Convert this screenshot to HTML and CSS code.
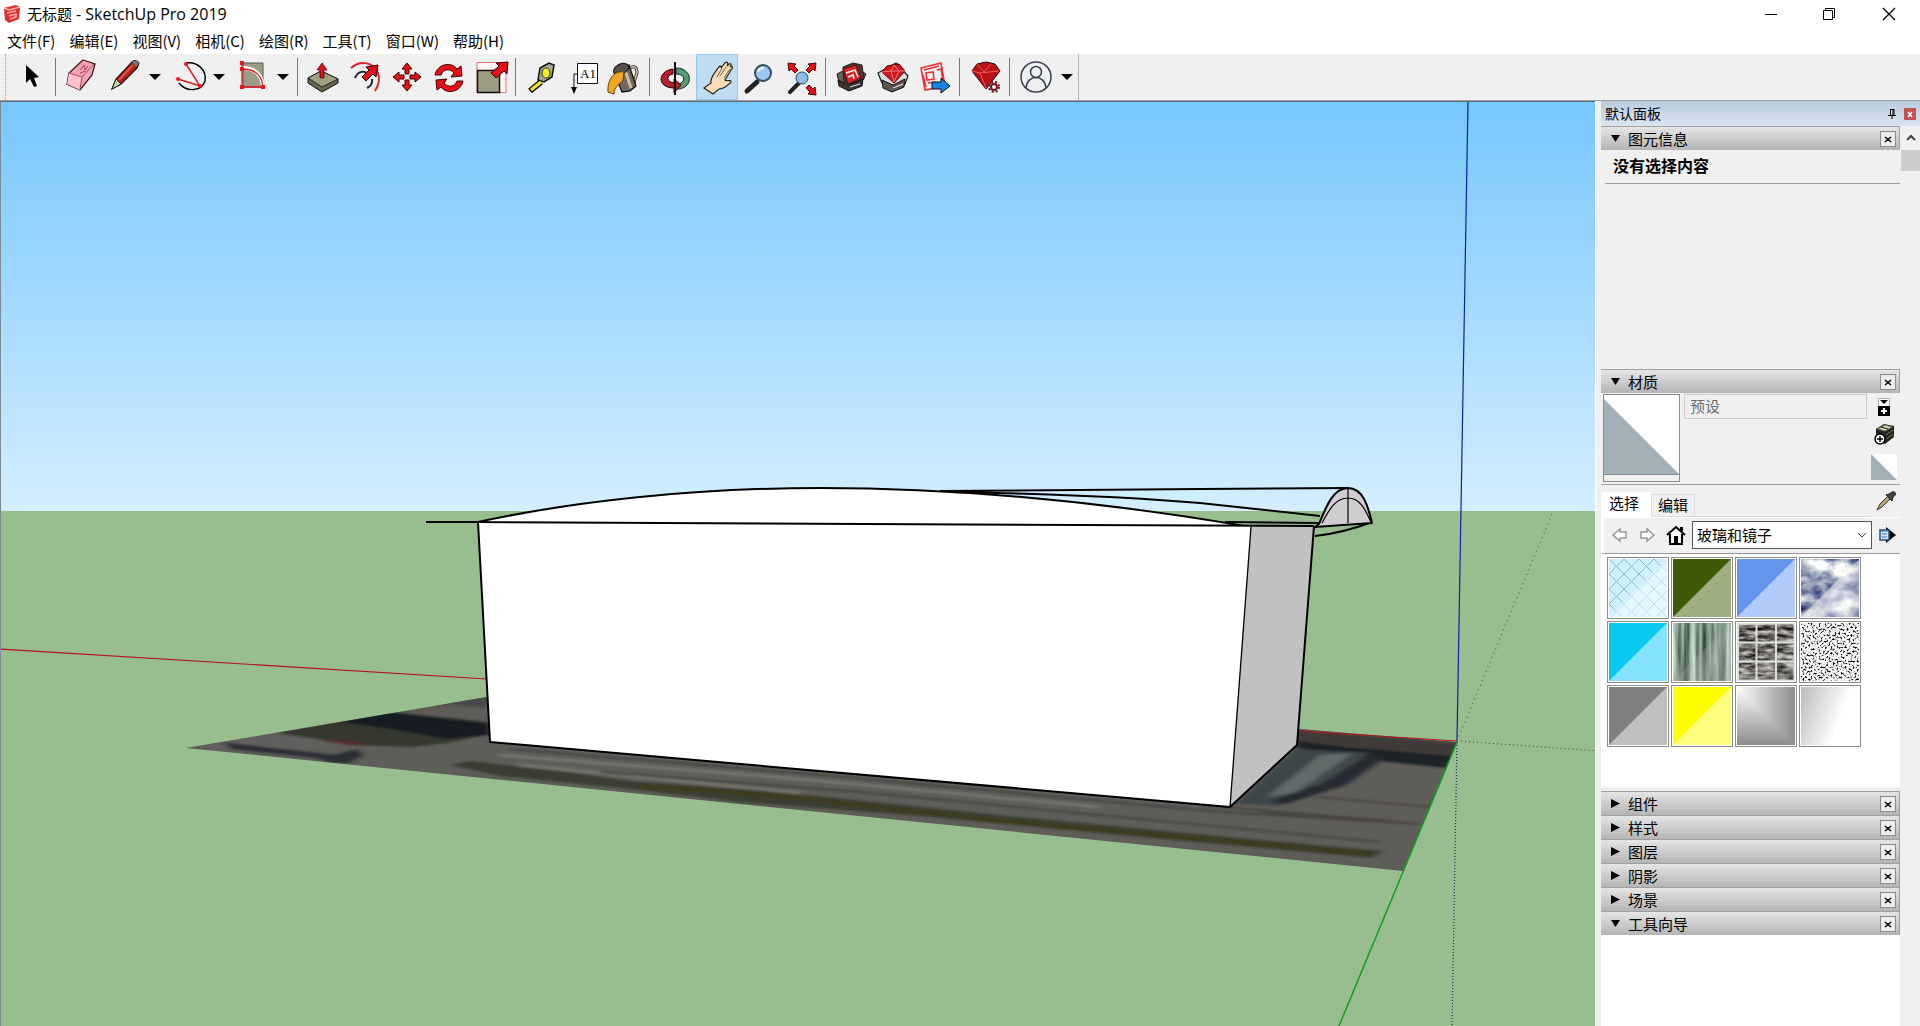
FILE: index.html
```html
<!DOCTYPE html>
<html lang="zh-CN">
<head>
<meta charset="utf-8">
<title>无标题 - SketchUp Pro 2019</title>
<link rel="stylesheet" href="styles.css">
</head>
<body>
<svg class="defs" aria-hidden="true">
  <defs>
    <symbol id="x" viewBox="0 0 14 14"><path d="M4 5l6 5M10 5l-6 5" stroke="#000" stroke-width="1.500" fill="none"/></symbol>
    <symbol id="caret" viewBox="0 0 12 6"><path d="M0 0h12L6 6z"/></symbol>
    <symbol id="open" viewBox="0 0 10 10"><path d="M0 1h10L5 9z"/></symbol>
    <symbol id="shut" viewBox="0 0 10 10"><path d="M0 0v10l10-5z"/></symbol>
    <symbol id="half" viewBox="0 0 58 58"><path d="M58 0v58H0z" fill="#fff" fill-opacity=".5"/></symbol>
  </defs>
</svg>
<header class="titlebar">
  <svg class="logo" width="18" height="18" viewBox="3 5 18 18"><path d="M4 8l12-3 4 2-1 12-10 4-4-3z" fill="#e32b2b"/><path d="M4 8l5 2 11-3M7 13l9-2M9 16l7-2v3l-6 2" stroke="#ffb3b0" stroke-width="1.500" fill="none"/></svg>
  <h1 class="title">无标题 <span class="app-name">- SketchUp Pro 2019</span></h1>
  <div class="window-buttons">
    <button aria-label="最小化"><svg width="14" height="14" viewBox="0 0 14 14"><path d="M1 7.500h12" stroke="#000"/></svg></button>
    <button aria-label="还原"><svg width="14" height="14" viewBox="0 0 14 14"><path d="M1.500 3.500h9v9h-9zM3.500 3V1.500h9v9H11" stroke="#000" fill="none"/></svg></button>
    <button aria-label="关闭"><svg width="14" height="14" viewBox="0 0 14 14"><path d="M1 1l12 12M13 1L1 13" stroke="#000" stroke-width="1.200"/></svg></button>
  </div>
</header>
<nav class="menubar">
  <button>文件(F)</button><button>编辑(E)</button><button>视图(V)</button><button>相机(C)</button><button>绘图(R)</button><button>工具(T)</button><button>窗口(W)</button><button>帮助(H)</button>
</nav>
<div class="toolbar-row">
<div class="toolbar" role="toolbar" aria-label="工具">
  <span class="grip"></span>
  <button aria-label="选择"><svg viewBox="10 56 42 46"><path d="M26 67v18l4-4 4 8 3-1-3-8 5-1z"/></svg></button>
  <span class="sep"></span>
  <button aria-label="橡皮擦"><svg viewBox="60 56 42 46"><path d="M83 62l12 4-3 11-12 15-13-6 2-11z" fill="#f7a1b4" stroke="#3a1a20" stroke-width="1.300"/><path d="M69 75l13 4-2 13-13-6z" fill="#ffc2cc"/><path d="M69 75l13 4 12-13M82 79l-2 12" stroke="#a0505f" fill="none"/><path d="M80 72l4-5 1 5 3-4M80 75l6-2" stroke="#b23c5c" fill="none"/></svg></button>
  <button aria-label="直线"><svg viewBox="102 56 42 46"><path d="M112 91l4-10 16-17q4-3 7 1-1 4-3 6l-15 15z" fill="#b5221e" stroke="#241010" stroke-width="1.200"/><path d="M112 91l4-10 5 5z" fill="#cdd9a0" stroke="#222"/><path d="M119 82l14-15" stroke="#e96153" stroke-width="1.500"/><path d="M132 64q4-3 7 1l-3 4z" fill="#777"/></svg></button>
  <button class="drop" aria-label="直线选项"><svg><use href="#caret"/></svg></button>
  <button aria-label="圆弧"><svg viewBox="166 56 42 46"><path d="M186 65c11-2 21 7 19 18-3 10-18 12-26 2" fill="none" stroke="#000" stroke-width="1.400"/><path d="M186 66l14 22-22-7" fill="none" stroke="#e3101a" stroke-width="1.400"/><g fill="#ef1020"><circle cx="186" cy="66" r="2"/><circle cx="200" cy="88" r="2"/><circle cx="178" cy="81" r="2"/></g></svg></button>
  <button class="drop" aria-label="圆弧选项"><svg><use href="#caret"/></svg></button>
  <button aria-label="矩形"><svg viewBox="230 56 42 46"><path d="M243 65h20v24h-20z" fill="#9c9c82" stroke="#555"/><path d="M242 70c13 0 20 6 21 19" stroke="#fff" stroke-width="4" fill="none"/><path d="M242 65v24h21M242 71c13 0 20 6 21 18" stroke="#e3101a" stroke-width="1.300" fill="none"/><path fill="#ef1020" d="M240 63h4v4h-4zM240 69h4v4h-4zM240 87h4v4h-4zM261 87h4v4h-4z"/></svg></button>
  <button class="drop" aria-label="矩形选项"><svg><use href="#caret"/></svg></button>
  <span class="sep"></span>
  <button aria-label="推拉"><svg viewBox="302 56 42 46"><path d="M308 80l13-7 17 8v4l-16 9-14-9z" fill="#656551" stroke="#111"/><path d="M308 80l13-7 17 8-16 8z" fill="#a0a084" stroke="#222"/><path d="M322 65l5 7h-3v8h-4v-8h-3z" fill="#e3101a" stroke="#300" stroke-width=".7"/></svg></button>
  <button aria-label="偏移"><svg viewBox="344 56 42 46"><path d="M351 70c10-9 23-5 27 5 2 6 1 12-3 18" stroke="#e3202a" stroke-width="2" fill="none"/><path d="M355 80c3-7 9-8 14-4M372 81q1 6-5 9" stroke="#222" stroke-width="2" fill="none"/><path d="M362 79l7-7-3-3 12-2-2 12-3-3-7 7z" fill="#e3101a" stroke="#300"/></svg></button>
  <button aria-label="移动"><svg viewBox="386 56 42 46"><path id="mv" d="M407 65l5 6h-3v5h-4v-5h-3z" fill="#e3101a" stroke="#400"/><use href="#mv" transform="rotate(90 407 79)"/><use href="#mv" transform="rotate(180 407 79)"/><use href="#mv" transform="rotate(270 407 79)"/></svg></button>
  <button aria-label="旋转"><svg viewBox="428 56 42 46"><path id="rt" d="M435 77c2-11 16-14 22-6l4-3 1 10-11 1 3-4c-4-5-11-4-13 2z" fill="#e3101a" stroke="#400"/><use href="#rt" transform="rotate(180 449 80)"/></svg></button>
  <button aria-label="缩放"><svg viewBox="470 56 42 46"><path d="M477 64.500h29v30h-29z" fill="#fff5f5" stroke="#e3707a"/><path d="M477.500 72.500h22v22h-22z" fill="#9c9c82" stroke="#111" stroke-width="1.500"/><path d="M491 75l8-7-3-3 12-1-1 12-3-3-8 7z" fill="#e3101a" stroke="#300"/></svg></button>
  <span class="sep"></span>
  <button aria-label="卷尺"><svg viewBox="520 56 42 46"><path d="M540 70l9-5 5 2-2 12-8 5-6-2z" fill="#a5a598" stroke="#111" stroke-width="1.500"/><ellipse cx="546" cy="75" rx="4" ry="5" fill="#f5ee20" stroke="#333"/><path d="M541 84l-11 9" stroke="#111" stroke-width="6"/><path d="M541 84l-10 8" stroke="#f5e628" stroke-width="3"/></svg></button>
  <button aria-label="文字"><svg viewBox="562 56 42 46"><path d="M577.500 65.500h20v20h-20z" fill="#fff" stroke="#111"/><text x="580" y="80" class="icon-text">A1</text><path d="M577 76h-3v14" stroke="#111" fill="none"/><path d="M571 89h6l-3 7z"/></svg></button>
  <button aria-label="材质"><svg viewBox="604 56 42 46"><path d="M630 70q7-4 7 5l-4 12" stroke="#222" stroke-width="3" fill="none"/><path d="M630 70q7-4 7 5l-4 12" stroke="#d8cdb8" stroke-width="1.500" fill="none"/><path d="M614 74l15-7 7 21-6 5-8 1z" fill="#6f665c" stroke="#111" stroke-width="1.300"/><path d="M625 72l6 18" stroke="#c9bda8" stroke-width="3"/><ellipse cx="621" cy="71" rx="8" ry="5" fill="#55524c" stroke="#111" transform="rotate(-25 621 71)"/><path d="M624 74c-10-2-17 8-16 20l6 2c0-7 5-9 9-14z" fill="#f1a922" stroke="#654008"/></svg></button>
  <span class="sep"></span>
  <button aria-label="环绕观察"><svg viewBox="654 56 42 46"><path d="M676 70c17 0 18 20 2 21v-5c8-1 8-10-2-10z" fill="#579b73" stroke="#123"/><path d="M673 71c-16 2-16 19 1 19v5l7-8-7-6v4c-8-1-8-8-1-9z" fill="#b5222d" stroke="#300"/><path d="M675 64v33" stroke="#111" stroke-width="2"/></svg></button>
  <button class="active" aria-label="平移" aria-pressed="true"><svg viewBox="696 56 42 46"><path d="M704 90l7-5c-1-6 4-10 7-15 2-3 4-2 3 0l4-5c2-2 4 0 2 3l2-2c2-1 3 1 1 3l1-1c2 0 2 2 0 4l-6 10c2 2 6-1 6 2-3 3-6 7-12 7l-6 5z" fill="#f8dcb5" stroke="#29231b" stroke-width="1.200"/><path d="M717 79l5-9M720 78l6-9M724 80l6-9" stroke="#7b624a"/></svg></button>
  <button aria-label="缩放视图"><svg viewBox="738 56 42 46"><path d="M747 93l10-9" stroke="#222" stroke-width="5" stroke-linecap="round"/><circle cx="763" cy="75" r="8" fill="#9ec8ef" stroke="#344a5d" stroke-width="2"/><path d="M758 74q1-4 6-4" stroke="#e7f6ff" stroke-width="2" fill="none"/></svg></button>
  <button aria-label="充满视窗"><svg viewBox="780 56 42 46"><path d="M790 94l9-9" stroke="#222" stroke-width="4" stroke-linecap="round"/><circle cx="802" cy="80" r="6" fill="#8dbeea" stroke="#345"/><path id="ex" d="M788 65l8 1-2 2 4 4-3 3-4-4-2 2z" fill="#e3101a" stroke="#500"/><use href="#ex" transform="translate(1604) scale(-1 1)"/><use href="#ex" transform="rotate(180 802 81)"/></svg></button>
  <span class="sep"></span>
  <button aria-label="3D 模型库"><svg viewBox="830 56 42 46"><path d="M837 76l6-3 2 12-6-1zM861 73l5 3-3 6-3-1z" fill="#6a6259" stroke="#111"/><path d="M843 69l10-4 9 2 2 14-13 6-7-4z" fill="#5a3530" stroke="#222"/><path d="M843 71l13-4 5 13-13 6z" fill="#e0222b" stroke="#411"/><path d="M846 75l9-3 3 7M848 79l5-2 1 4" stroke="#fff" stroke-width="1.400" fill="none"/><path d="M838 82l11 5 14-6-1 7-13 5-10-5z" fill="#3a3631" stroke="#111"/><path d="M850 89l10-3" stroke="#ddd"/></svg></button>
  <button aria-label="扩展程序库"><svg viewBox="872 56 42 46"><path d="M878 75l18-10 12 13-3 8-13 5-10-6z" fill="#ddd" stroke="#222" stroke-width="1.300"/><path d="M882 74l5-6 12-2 6 7-11 12z" fill="#cf1821" stroke="#500"/><path d="M882 74l9-1 14 0M891 73l3 11 5-11-5-6z" stroke="#f47873" fill="none"/><path d="M882 82l11 5 12-6-1 8-12 5-9-4z" fill="#5b564f" stroke="#111"/><path d="M893 90l10-4" stroke="#eee"/></svg></button>
  <button aria-label="LayOut"><svg viewBox="914 56 42 46"><path d="M921 70l20-5 4 23-20 4zM924 72l15-4M926 75l7-1 1 7-7 1zM937 72l4-1 2 11M928 85l7-1M923 77l3 12" stroke="#ef3038" stroke-width="1.600" fill="none"/><path d="M932 84h9v-4l9 8-9 7v-4h-9z" fill="#1683dc" stroke="#111"/></svg></button>
  <span class="sep"></span>
  <button aria-label="扩展程序管理器"><svg viewBox="963 56 42 46"><path d="M971 73l5-7 9-2 9 2 5 7-14 18z" fill="#ba1118" stroke="#300"/><path d="M971 73l8 2 9-1 10-1M979 75l6 15M976 66l7 8 7-8" stroke="#f36059" fill="none"/><circle cx="993" cy="89" r="5" fill="none" stroke="#741324" stroke-width="2" stroke-dasharray="2 2"/><circle cx="993" cy="89" r="3" fill="#eee" stroke="#741324" stroke-width="2"/></svg></button>
  <span class="sep"></span>
  <button aria-label="账户"><svg viewBox="1015 56 42 46"><g fill="none" stroke="#374151" stroke-width="1.500"><circle cx="1037" cy="79" r="15"/><circle cx="1037" cy="74" r="5.500"/><path d="M1027 90c1-14 19-14 20 0"/></g></svg></button>
  <button class="drop" aria-label="账户选项"><svg><use href="#caret"/></svg></button>
</div>
</div>
<div class="workspace">
<main class="viewport">
<svg class="scene" viewBox="1 102 1594 924" preserveAspectRatio="xMinYMin slice" role="img" aria-label="模型">
  <defs>
    <linearGradient id="sky" x1="0" y1="0" x2="0" y2="1"><stop offset="0" stop-color="#76c7ff"/><stop offset=".5" stop-color="#a4daff"/><stop offset="1" stop-color="#d4eeff"/></linearGradient>
    <clipPath id="lot"><path d="M186 748L487 697L1300 729L1457 742L1403 871z"/></clipPath>
    <filter id="soft" x="-10%" y="-50%" width="120%" height="200%"><feGaussianBlur stdDeviation="3 1"/></filter>
  </defs>
  <path d="M0 101h2400v410H0z" fill="url(#sky)"/>
  <path d="M0 511h2400v1100H0z" fill="#98be90"/>
  <g clip-path="url(#lot)">
    <path d="M180 690h1290v190H180z" fill="#5e5d59"/>
    <g filter="url(#soft)">
      <path d="M410 712l77-18v14l-40-3z" fill="#484846"/>
      <path d="M280 732l64-12 46-8 100 10v12l-44 9-33 4-60-2-73-9z" fill="#34382f"/>
      <path d="M340 722l49-10 101 12v11l-44 4-49-9z" fill="#181f24"/>
      <path d="M318 739l50 4-20 2z" fill="#5c2c2a"/>
      <path d="M186 748l46-9 48-5 38 5 20 9z" fill="#62605e"/>
      <path d="M222 742l113 13 22-6 6 6-14 8-18 0-14-5-85-9z" fill="#2c2f36"/>
      <path d="M450 765l20-4 98 11 61 9 140 10 230 24 230 22 154 14-12 7-220-20-230-22-180-14-120-14-120-12z" fill="#3a3d33"/>
      <path d="M640 786l130 9 230 26 370 33" stroke="#3d3b18" stroke-width="3" fill="none"/>
      <path d="M499 755l301 24 300 28M520 765l280 28" stroke="#77746e" stroke-width="3" fill="none"/>
      <path d="M510 749l300 25 400 37 210 13M600 772l260 20 520 50M1200 805l200 17" stroke="#45443d" stroke-width="2" fill="none"/>
      <path d="M1290 729l170 14-9 20-155-16z" fill="#3f3a37"/>
      <path d="M1296 741l50 6 107 9-7 12-75-8-75-12z" fill="#1e2328"/>
      <path d="M1295 749l75 4-90 53-45-2z" fill="#3e464a"/>
      <path d="M1320 755l33-2-58 40-28 4z" fill="#626a6b"/>
      <path d="M1366 756l20 1-40 28-60 19-16-3 50-17z" fill="#272c30"/>
      <path d="M1317 797l116 10M1262 812l158 12" stroke="#484541" stroke-width="2" fill="none"/>
    </g>
  </g>
  <g fill="none" stroke-width="1.200">
    <path d="M0 649L487 679M1298 731L1457 741" stroke="#b5141c"/>
    <path d="M1468 101L1457 741" stroke="#0c1fa8"/>
    <path d="M1457 742L1339 1026L1300 1120" stroke="#169c22" stroke-width="1.500"/>
    <path d="M1457 742L1452 1026" stroke="#14345c" stroke-dasharray="1 2"/>
    <path d="M1457 741L1600 751" stroke="#733b2d" stroke-dasharray="1 3"/>
    <path d="M1457 741L1552 514" stroke="#45663b" stroke-dasharray="1 4"/>
  </g>
  <path d="M478 522C570 502 690 488 820 488C960 488 1110 503 1245 526L1251 527L1230 807L490 742z" fill="#fff"/>
  <path d="M1251 527h63l-17 218-67 62z" fill="#c1c1c1"/>
  <g fill="none" stroke="#000" stroke-width="2" stroke-linejoin="round">
    <path d="M426 522l52 0 600 3 236 1M478 522C570 502 690 488 820 488C960 488 1110 503 1245 526"/>
    <path d="M478 522l12 220 740 65 67-62 17-219"/>
    <path d="M1251 527l-21 280" stroke-width="1.300"/>
    <path d="M940 491l260-2 148-1M950 492C1070 494 1140 498 1200 503L1320 516M1225 522l95 1"/>
    <path d="M1372 522q-29 11-57 14"/>
    <path d="M1319 524c7-17 14-36 29-36s20 18 24 35l-57 4z" fill="#cfcdcf"/>
    <path d="M1348 488v35M1322 523c8-15 14-25 26-25s17 11 23 24" stroke-width="1.200"/>
  </g>
</svg>
</main>
<aside class="tray">
  <header class="tray-title"><h2>默认面板</h2>
    <button class="pin" aria-label="固定"><svg width="8" height="10" viewBox="0 0 8 10"><path d="M2 .5h4M2.500 0v6M5 0v6M6 0v6M0 6.500h8M4 7v3" stroke="#000" fill="none"/></svg></button>
    <button class="tray-close" aria-label="关闭面板"><svg width="12" height="12" viewBox="0 0 12 12"><path d="M4 4l4 5M8 4L4 9" stroke="#fff" stroke-width="1.500"/></svg></button>
  </header>
  <div class="tray-body">
    <div class="panels">
      <section class="entity">
        <div class="panel-head"><button class="toggle" aria-expanded="true"><svg><use href="#open"/></svg>图元信息</button><button class="close" aria-label="关闭"><svg><use href="#x"/></svg></button></div>
        <p>没有选择内容</p>
      </section>
      <section class="materials">
        <div class="panel-head"><button class="toggle" aria-expanded="true"><svg><use href="#open"/></svg>材质</button><button class="close" aria-label="关闭"><svg><use href="#x"/></svg></button></div>
        <div class="current">
          <svg class="preview" viewBox="0 0 75 86" preserveAspectRatio="none"><path d="M0 0h75v86H0z" fill="#fff"/><path d="M0 4l75 75H0z" fill="#a2b0b7"/><path d="M0 79.500h75" stroke="#888"/><path d="M0 80h75v6H0z" fill="#f0f0f0"/></svg>
          <input aria-label="材质名称" value="预设" disabled>
          <div class="side">
            <button aria-label="显示辅助面板"><svg width="12" height="18" viewBox="0 0 12 18"><path d="M.5.500h11v8H.5z" fill="#fff" stroke="#aaa"/><path d="M2 2h8L6 6z"/><path d="M0 8h12v10H0z"/><path d="M6 10v6M3 13h6" stroke="#fff" stroke-width="2"/></svg></button>
            <button aria-label="创建材质"><svg width="20" height="22" viewBox="0 0 20 22"><path d="M2 5l8-5 10 2v11l-9 7-9-3z" fill="#24261e"/><path d="M4 5l7-4 7 2-7 4zM12 11l7-5M12 15l7-5" fill="#d0d1ac" stroke="#77775e"/><path d="M7 3l7 2" stroke="#24261e"/><circle cx="6" cy="15" r="5" fill="#fff" stroke="#000" stroke-width="1.500"/><path d="M6 12v6M3 15h6" stroke="#000" stroke-width="1.500"/></svg></button>
            <button aria-label="预设材质"><svg width="26" height="26" viewBox="0 0 26 26"><path d="M0 0h26v26z" fill="#fff"/><path d="M0 0l26 26H0z" fill="#a2b0b7"/></svg></button>
          </div>
        </div>
        <div class="tabs" role="tablist">
          <button role="tab" aria-selected="true">选择</button><button role="tab" aria-selected="false">编辑</button><span class="tab-line"></span>
          <button class="dropper" aria-label="样本颜料"><svg width="22" height="22" viewBox="0 0 22 22"><path d="M2 20l3-6 8-8 2 3-8 8z" fill="#b9a66e" stroke="#333"/><path d="M11 5l6 6 1-4c4-2 3-6-1-5l-3 2z" fill="#42464a" stroke="#222"/></svg></button>
        </div>
        <div class="browse">
          <button aria-label="后退"><svg width="16" height="16" viewBox="0 0 16 16"><path d="M1 8l7-6v3h6v6H8v3z" fill="#fff" stroke="#999" stroke-width="1.500"/></svg></button>
          <button aria-label="前进"><svg width="16" height="16" viewBox="0 0 16 16"><path d="M15 8L8 2v3H2v6h6v3z" fill="#fff" stroke="#999" stroke-width="1.500"/></svg></button>
          <button class="home" aria-label="在模型中"><svg width="20" height="20" viewBox="0 0 20 20"><path d="M1 10l9-8 9 8M4 9v10h12V9" fill="#fff" stroke="#000" stroke-width="2"/><path d="M8 11h4v8H8zM14 2h3v5l-3-2z"/></svg></button>
          <div class="select-wrap"><select aria-label="材质集"><option>玻璃和镜子</option></select><svg width="10" height="6" viewBox="0 0 10 6"><path d="M1 1l4 4 4-4" stroke="#444" fill="none"/></svg></div>
          <button aria-label="详细信息"><svg width="17" height="18" viewBox="0 0 17 18"><path d="M7 1l10 8-10 8z"/><path d="M1 4h9v10H1z" fill="#d2e8ff" stroke="#234b74" stroke-width="1.500"/><path d="M2 5h7M3 8h5M3 11h5" stroke="#3d74b5"/></svg></button>
        </div>
        <div class="swatches">
          <button aria-label="菱形玻璃"><svg viewBox="0 0 58 58"><defs><pattern id="dia" width="15" height="15" patternUnits="userSpaceOnUse"><path d="M0 0l15 15M15 0L0 15" stroke="#8fb9ca" fill="none"/></pattern></defs><path d="M0 0h58v58H0z" fill="#cdf1ff"/><path d="M0 0h58v58H0z" fill="url(#dia)"/><use href="#half"/></svg></button>
          <button aria-label="绿色玻璃"><svg viewBox="0 0 58 58"><path d="M0 0h58v58H0z" fill="#3d5b04"/><use href="#half"/></svg></button>
          <button aria-label="蓝色玻璃"><svg viewBox="0 0 58 58"><path d="M0 0h58v58H0z" fill="#6495ec"/><use href="#half"/></svg></button>
          <button aria-label="天空反射"><svg viewBox="0 0 58 58"><defs><filter id="cloud" x="0" y="0" width="1" height="1" color-interpolation-filters="sRGB"><feTurbulence type="fractalNoise" baseFrequency=".04 .055" numOctaves="4" seed="8"/><feColorMatrix values="2 0 0 0 -.45  1.900 0 0 0 -.36  1.200 0 0 0 .1  0 0 0 0 1"/></filter></defs><path d="M0 0h58v58H0z" filter="url(#cloud)"/><use href="#half"/></svg></button>
          <button aria-label="青色玻璃"><svg viewBox="0 0 58 58"><path d="M0 0h58v58H0z" fill="#08c8f2"/><use href="#half"/></svg></button>
          <button aria-label="条纹玻璃"><svg viewBox="0 0 58 58"><defs><filter id="bars" x="0" y="0" width="1" height="1" color-interpolation-filters="sRGB"><feTurbulence type="fractalNoise" baseFrequency=".17 .01" numOctaves="3" seed="4"/><feColorMatrix values="1.100 0 0 0 -.02  1.100 0 0 0 .07  1.100 0 0 0 .01  0 0 0 0 1"/></filter></defs><path d="M0 0h58v58H0z" filter="url(#bars)"/><path d="M58 0v58H0z" fill="#aaa" fill-opacity=".3"/></svg></button>
          <button aria-label="玻璃砖"><svg viewBox="0 0 58 58"><defs><filter id="brick" x="0" y="0" width="1" height="1" color-interpolation-filters="sRGB"><feTurbulence type="fractalNoise" baseFrequency=".08 .25" numOctaves="3" seed="5"/><feColorMatrix values="1.300 0 0 0 -.22  1.300 0 0 0 -.23  1.300 0 0 0 -.25  0 0 0 0 1"/></filter></defs><path d="M0 0h58v58H0z" filter="url(#brick)"/><path d="M1 0v58M19.500 0v58M39 0v58M57.500 0v58M0 .500h58M0 19.500h58M0 38.500h58M0 57.500h58" stroke="#ddd" stroke-width="2"/><path d="M58 0v58H0z" fill="#fff" fill-opacity=".1"/></svg></button>
          <button aria-label="斑点玻璃"><svg viewBox="0 0 58 58"><defs><filter id="spots" x="0" y="0" width="1" height="1" color-interpolation-filters="sRGB"><feTurbulence type="fractalNoise" baseFrequency=".5" numOctaves="2" seed="7"/><feColorMatrix values="4 0 0 0 -1.100  4 0 0 0 -1.100  4 0 0 0 -1.100  0 0 0 0 1"/></filter></defs><path d="M0 0h58v58H0z" filter="url(#spots)"/></svg></button>
          <button aria-label="灰色玻璃"><svg viewBox="0 0 58 58"><path d="M0 0h58v58H0z" fill="#808080"/><use href="#half"/></svg></button>
          <button aria-label="黄色玻璃"><svg viewBox="0 0 58 58"><path d="M0 0h58v58H0z" fill="#ff0"/><use href="#half"/></svg></button>
          <button aria-label="镜面"><svg viewBox="0 0 58 58"><defs><linearGradient id="across"><stop offset="0" stop-color="#fff"/><stop offset="1" stop-color="#8c8c8c"/></linearGradient><linearGradient id="down" x2="0" y2="1"><stop offset="0" stop-color="#fff"/><stop offset="1" stop-color="#8c8c8c"/></linearGradient></defs><path d="M0 0h58v58H0z" fill="url(#across)"/><path d="M0 0l58 58H0z" fill="url(#down)"/></svg></button>
          <button aria-label="浅色镜面"><svg class="light-mirror" viewBox="0 0 58 58"></svg></button>
        </div>
      </section>
      <section class="stack">
        <div class="panel-head"><button class="toggle" aria-expanded="false"><svg><use href="#shut"/></svg>组件</button><button class="close" aria-label="关闭"><svg><use href="#x"/></svg></button></div>
        <div class="panel-head"><button class="toggle" aria-expanded="false"><svg><use href="#shut"/></svg>样式</button><button class="close" aria-label="关闭"><svg><use href="#x"/></svg></button></div>
        <div class="panel-head"><button class="toggle" aria-expanded="false"><svg><use href="#shut"/></svg>图层</button><button class="close" aria-label="关闭"><svg><use href="#x"/></svg></button></div>
        <div class="panel-head"><button class="toggle" aria-expanded="false"><svg><use href="#shut"/></svg>阴影</button><button class="close" aria-label="关闭"><svg><use href="#x"/></svg></button></div>
        <div class="panel-head"><button class="toggle" aria-expanded="false"><svg><use href="#shut"/></svg>场景</button><button class="close" aria-label="关闭"><svg><use href="#x"/></svg></button></div>
        <div class="panel-head"><button class="toggle" aria-expanded="true"><svg><use href="#open"/></svg>工具向导</button><button class="close" aria-label="关闭"><svg><use href="#x"/></svg></button></div>
      </section>
    </div>
    <div class="scrollbar"><button aria-label="向上滚动"><svg width="10" height="8" viewBox="0 0 10 8"><path d="M1 6l4-4 4 4" stroke="#444" stroke-width="2" fill="none"/></svg></button><span class="thumb"></span></div>
  </div>
</aside>
</div>
</body>
</html>
```
FILE: styles.css
```css
* { box-sizing: border-box; }
body {
  margin: 0;
  height: 100vh;
  display: flex;
  flex-direction: column;
  overflow: hidden;
  background: #f0f0f0;
  color: #000;
  font: 15px/20px "Open Sans", "Noto Sans CJK SC", sans-serif;
}
button {
  margin: 0;
  padding: 0;
  border: 0;
  background: none;
  color: inherit;
  font: inherit;
  display: flex;
  align-items: center;
  justify-content: center;
}
svg { display: block; flex: none; }
h1, h2, p { margin: 0; font-size: 15px; font-weight: 400; }
.defs { position: absolute; width: 0; height: 0; }

.titlebar { display: flex; align-items: center; height: 28px; background: #fff; padding-left: 3px; flex: none; }
.title { margin-left: 6px; flex: 1; }
.app-name { font-size: 16px; }
.window-buttons { display: flex; }
.window-buttons button { width: 58px; height: 28px; }
.window-buttons button:last-child { width: 62px; }

.menubar { display: flex; gap: 14px; height: 26px; padding-left: 7px; background: #fff; flex: none; font-family: "Noto Sans CJK SC", sans-serif; }

.toolbar-row { display: flex; height: 47px; border-bottom: 1px solid #a0a0a0; flex: none; }
.toolbar { display: flex; align-items: center; border-right: 1px solid #b4b4b4; }
.toolbar button { width: 42px; height: 46px; }
.toolbar button svg { width: 42px; height: 46px; }
.toolbar .drop { width: 22px; }
.toolbar .drop svg { width: 12px; height: 6px; }
.toolbar .active { background: #c0dcf3; box-shadow: inset 0 0 0 1px #90c8f6; }
.grip { width: 1px; height: 46px; margin: 0 4px 0 5px; border-left: 1px dotted #999; }
.sep { width: 1px; height: 38px; margin: 0 4px 0 3px; background: #777; }
.icon-text { font: 13px "Liberation Serif", serif; }

.workspace { display: flex; flex: 1; min-height: 0; }
.viewport { flex: 1; min-width: 0; border-top: 1px solid #5d6b75; border-left: 1px solid #7d8a92; }
.scene { width: 100%; height: 100%; }

.tray { flex: none; width: 325px; padding-left: 5px; display: flex; flex-direction: column; border-left: 1px solid #fff; }
.tray-title { display: flex; align-items: center; height: 25px; padding: 0 4px 0 4px; background: linear-gradient(#b9cbdc, #d9e5f1); }
.tray-title h2 { flex: 1; font-size: 14px; }
.pin { width: 12px; height: 12px; margin-right: 6px; }
.tray-close { width: 12px; height: 12px; background: #c75050; }
.tray-body { display: flex; flex: 1; min-height: 0; }
.panels { flex: 1; min-width: 0; display: flex; flex-direction: column; }
.scrollbar { flex: none; width: 20px; padding-left: 1px; }
.scrollbar button { width: 19px; height: 24px; }
.thumb { display: block; height: 21px; background: #cdcdcd; }

.panel-head {
  display: flex;
  align-items: center;
  height: 24px;
  padding: 0 3px 0 10px;
  border-top: 1px solid #a0a0a0;
  border-right: 1px solid #a0a0a0;
  background: linear-gradient(#e6e6e6, #b4b4b4);
}
.toggle { flex: 1; justify-content: flex-start; gap: 8px; height: 22px; }
.toggle svg { width: 9px; height: 9px; }
.close { width: 16px; height: 16px; border: 1px solid #8c8c8c; background: #ececec; }
.close svg { width: 14px; height: 14px; }

.entity { height: 243px; }
.entity p { margin-left: 4px; padding: 6px 8px 7px; border-bottom: 1px solid #a0a0a0; font-size: 16px; font-weight: 700; }

.current { display: flex; align-items: flex-start; height: 92px; padding: 1px 3px 0 2px; border-bottom: 1px solid #a0a0a0; }
.preview { width: 77px; height: 88px; border: 1px solid #8c8c8c; }
.current input { flex: 1; min-width: 0; height: 25px; margin: 0 4px; padding: 0 5px 2px; border: 1px solid #ccc; background: #f0f0f0; color: #6d6d6d; font: inherit; }
.side { width: 26px; display: flex; flex-direction: column; align-items: center; gap: 8px; padding-top: 4px; }

.tabs { display: flex; align-items: flex-end; height: 32px; }
.tabs [role="tab"] { width: 44px; height: 23px; padding-bottom: 2px; border: 1px solid #dcdcdc; }
.tabs [aria-selected="true"] { width: 50px; height: 25px; border: 0; background: #fff; padding: 0 4px 4px 0; }
.tab-line { flex: 1; height: 1px; background: #dcdcdc; }
.dropper { width: 29px; height: 32px; }

.browse { display: flex; align-items: center; gap: 11px; height: 37px; padding: 0 4px 2px 8px; border-left: 3px solid #fff; border-top: 1px solid #fff; border-bottom: 1px solid #999; }
.home { margin-right: -5px; }
.select-wrap { flex: 1; display: grid; align-items: center; margin-right: -4px; }
.select-wrap select { grid-area: 1 / 1; height: 28px; padding: 0 4px; border: 1px solid #555; border-radius: 0; appearance: none; background: #fff; color: #000; font: inherit; }
.select-wrap svg { grid-area: 1 / 1; justify-self: end; margin-right: 5px; pointer-events: none; }

.swatches { display: grid; grid-template-columns: repeat(auto-fill, 62px); gap: 2px; align-content: start; height: 233px; padding: 3px 6px; background: #fff; }
.swatches button { width: 62px; height: 62px; border: 1px solid #8c8c8c; background: #fff; }
.swatches svg { width: 58px; height: 58px; }
.light-mirror { background: linear-gradient(110deg, #bbb, #fff 65%); }

.stack { flex: 1; padding-top: 4px; background: linear-gradient(#eee 0 4px, #fff 4px); }
```
